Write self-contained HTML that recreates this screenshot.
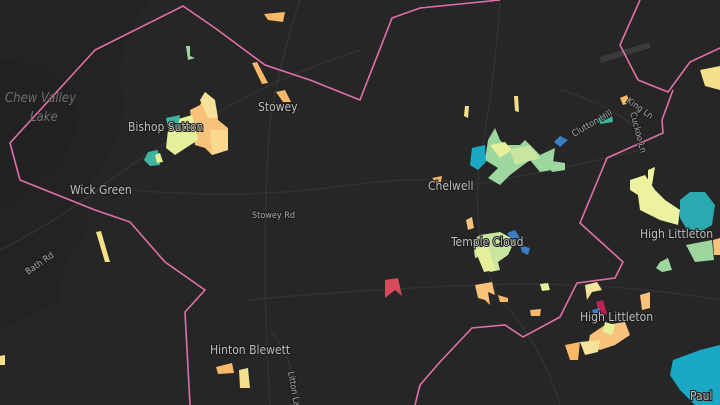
<!DOCTYPE html>
<html><head><meta charset="utf-8"><style>
html,body{margin:0;padding:0;background:#252525;width:720px;height:405px;overflow:hidden}
svg{display:block}
text{font-family:"DejaVu Sans Condensed","Liberation Sans",sans-serif;fill:#bdbdbd;font-size:11px;paint-order:stroke;stroke:#1c1c1c;stroke-width:2px}
</style></head><body>
<svg width="720" height="405" viewBox="0 0 720 405">
<rect width="720" height="405" fill="#262626"/>
<path d="M0 0 L150 0 Q120 40 120 80 Q130 130 100 170 Q80 200 90 230 Q60 260 60 300 L0 330Z" fill="#232323"/>
<path d="M0 60 Q40 60 70 90 Q90 120 60 160 Q30 190 0 210Z" fill="#212121"/>
<g stroke="#313131" stroke-width="1.6" fill="none">
<path d="M0 250 Q60 220 110 180 Q180 130 260 90 Q300 70 360 50"/>
<path d="M130 190 Q250 200 350 185 Q420 175 470 185 Q560 170 640 150"/>
<path d="M300 0 Q280 60 270 120 Q260 250 270 405"/>
<path d="M500 0 Q495 80 480 160 Q470 240 500 300 Q540 340 560 405"/>
<path d="M250 300 Q350 290 480 285 Q600 280 720 300"/>
<path d="M300 405 Q290 350 270 330"/>
<path d="M560 90 Q600 100 640 130"/>
<path d="M600 60 L650 45" stroke="#3a3a3a" stroke-width="6"/>
</g>
<g stroke="#e070a8" stroke-width="1.6" fill="none">
<path d="M500 0 L420 8 L392 18 L360 100 L310 80 L265 65 L215 28 L183 6 L95 50 L10 143 L20 180 L95 210 L130 222 L165 262 L205 290 L185 312 L190 405"/>
<path d="M640 0 L620 45 L638 80 L668 92 L690 62 L720 48"/>
<path d="M673 90 L662 120 L663 133 L607 158 L580 223 L623 262 L615 278 L577 283 L560 317 L523 337 L505 325 L472 328 L440 362 L420 385 L415 405"/>
</g>
<g>
<path d="M190 110 L200 105 L205 95 L215 105 L218 120 L228 128 L228 150 L212 155 L205 148 L195 145Z" fill="#f9c27a"/>
<path d="M200 100 L205 92 L215 100 L218 118 L208 118Z" fill="#f7e29a"/>
<path d="M168 130 L175 120 L192 115 L198 140 L175 155 L166 148Z" fill="#e6f09a"/>
<path d="M210 130 L228 130 L228 150 L212 155Z" fill="#fbd890"/>
<path d="M166 118 L180 115 L178 128 L168 128Z" fill="#3fb5a0"/>
<path d="M148 152 L158 150 L160 165 L150 166 L144 160Z" fill="#3fb5a0"/>
<path d="M155 155 L160 153 L163 162 L157 163Z" fill="#e6f09a"/>
<path d="M252 63 L257 62 L268 83 L262 84Z" fill="#f9b868"/>
<path d="M276 92 L285 90 L291 102 L283 102Z" fill="#f9b868"/>
<path d="M186 46 L190 46 L190 56 L195 58 L188 60Z" fill="#9cd8a0"/>
<path d="M264 14 L285 12 L283 22 L268 20Z" fill="#f9b868"/>
<path d="M96 232 L101 231 L110 262 L105 262Z" fill="#f4e08a"/>
<path d="M385 280 L398 278 L402 296 L395 290 L385 298Z" fill="#d84a5a"/>
<path d="M488 140 L495 128 L500 140 L505 145 L520 145 L525 140 L540 155 L555 148 L552 170 L540 172 L530 160 L510 175 L500 185 L488 178 L498 168 L485 160Z" fill="#9ed6a0"/>
<path d="M490 145 L505 142 L512 150 L500 158Z" fill="#e6f09a"/>
<path d="M510 150 L530 145 L540 158 L515 165Z" fill="#c8e6a0"/>
<path d="M545 160 L565 163 L565 170 L552 172Z" fill="#9ed6a0"/>
<path d="M472 148 L485 145 L486 162 L478 170 L470 165Z" fill="#1aa8c4"/>
<path d="M554 142 L560 136 L568 140 L560 147Z" fill="#3a7ec4"/>
<path d="M465 106 L469 106 L468 118 L464 116Z" fill="#f4e08a"/>
<path d="M514 96 L518 96 L519 112 L515 111Z" fill="#f4e08a"/>
<path d="M598 118 L612 115 L613 122 L600 124Z" fill="#3fb5a0"/>
<path d="M620 98 L627 95 L630 103 L623 105Z" fill="#f9b868"/>
<path d="M473 240 L480 235 L500 232 L515 240 L508 255 L498 262 L500 270 L490 272 L485 255 L475 258Z" fill="#c8e6a0"/>
<path d="M475 250 L488 245 L495 270 L484 272Z" fill="#e6f09a"/>
<path d="M507 233 L515 230 L520 238 L512 240Z" fill="#3a7ec4"/>
<path d="M520 245 L530 248 L528 255 L522 252Z" fill="#3a7ec4"/>
<path d="M466 220 L472 217 L474 228 L468 230Z" fill="#f9c27a"/>
<path d="M475 285 L492 282 L495 295 L488 292 L490 305 L485 300 L478 298Z" fill="#f9c27a"/>
<path d="M498 295 L508 298 L508 302 L500 302Z" fill="#f9b868"/>
<path d="M540 284 L548 283 L550 290 L542 291Z" fill="#e6f09a"/>
<path d="M530 310 L541 309 L540 316 L531 316Z" fill="#f9b868"/>
<path d="M585 285 L597 282 L602 290 L592 292 L587 300Z" fill="#f7e29a"/>
<path d="M596 302 L603 300 L607 314 L600 316Z" fill="#c02050"/>
<path d="M605 325 L625 322 L630 335 L615 345 L600 350 L588 345 L590 335Z" fill="#f9c27a"/>
<path d="M605 322 L615 325 L612 335 L603 332Z" fill="#e6f09a"/>
<path d="M565 345 L580 342 L578 360 L570 360Z" fill="#f9b868"/>
<path d="M580 342 L600 340 L598 352 L585 355Z" fill="#f7e29a"/>
<path d="M640 295 L650 292 L650 308 L642 310Z" fill="#f9c27a"/>
<path d="M592 310 L600 308 L600 318 L594 315Z" fill="#3a7ec4"/>
<path d="M630 180 L645 175 L655 190 L665 200 L680 210 L678 225 L660 220 L640 210 L638 195 L630 190Z" fill="#ecf2a0"/>
<path d="M648 170 L655 167 L652 185 L648 185Z" fill="#ecf2a0"/>
<path d="M680 200 L690 192 L705 192 L715 205 L712 225 L700 232 L686 228 L680 218Z" fill="#2aaab0"/>
<path d="M686 245 L712 240 L714 260 L695 262Z" fill="#9ed6a0"/>
<path d="M660 262 L668 258 L672 270 L662 272 L656 268Z" fill="#9ed6a0"/>
<path d="M713 240 L720 238 L720 255 L714 255Z" fill="#f9c27a"/>
<path d="M673 360 L700 350 L720 345 L720 405 L695 405 L680 390 L670 375Z" fill="#1aa8c4"/>
<path d="M700 70 L720 66 L720 90 L705 86Z" fill="#f4e08a"/>
<path d="M216 367 L232 363 L234 373 L218 374Z" fill="#f9b868"/>
<path d="M239 370 L248 368 L250 388 L240 388Z" fill="#f4e08a"/>
<path d="M432 178 L442 176 L440 186Z" fill="#f9b868"/>
<path d="M0 356 L5 355 L5 365 L0 365Z" fill="#f4e08a"/>
</g>
<text x="5" y="102" style="font-size:13px;font-style:italic;fill:#6e6e6e;stroke:none">Chew Valley</text>
<text x="30" y="121" style="font-size:13px;font-style:italic;fill:#6e6e6e;stroke:none">Lake</text>
<text x="128" y="131" style="font-size:12px">Bishop Sutton</text>
<text x="258" y="111" style="font-size:12px">Stowey</text>
<text x="70" y="194" style="font-size:12px">Wick Green</text>
<text x="252" y="218" style="font-size:9px;fill:#aaa">Stowey Rd</text>
<text x="28" y="275" style="font-size:9px;fill:#aaa" transform="rotate(-35 28 275)">Bath Rd</text>
<text x="210" y="354" style="font-size:12px">Hinton Blewett</text>
<text x="288" y="372" style="font-size:9px;fill:#aaa" transform="rotate(80 288 372)">Litton La</text>
<text x="428" y="190" style="font-size:12px">Chelwell</text>
<text x="451" y="246" style="font-size:12px">Temple Cloud</text>
<text x="574" y="137" style="font-size:9px;fill:#aaa" transform="rotate(-30 574 137)">Clutton Hill</text>
<text x="626" y="102" style="font-size:9px;fill:#aaa" transform="rotate(35 626 102)">King Ln</text>
<text x="630" y="113" style="font-size:9px;fill:#aaa" transform="rotate(75 630 113)">Cuckoo Ln</text>
<text x="640" y="238" style="font-size:12px">High Littleton</text>
<text x="580" y="321" style="font-size:12px">High Littleton</text>
<text x="690" y="400" style="font-size:12px">Paul</text>
</svg>
</body></html>
